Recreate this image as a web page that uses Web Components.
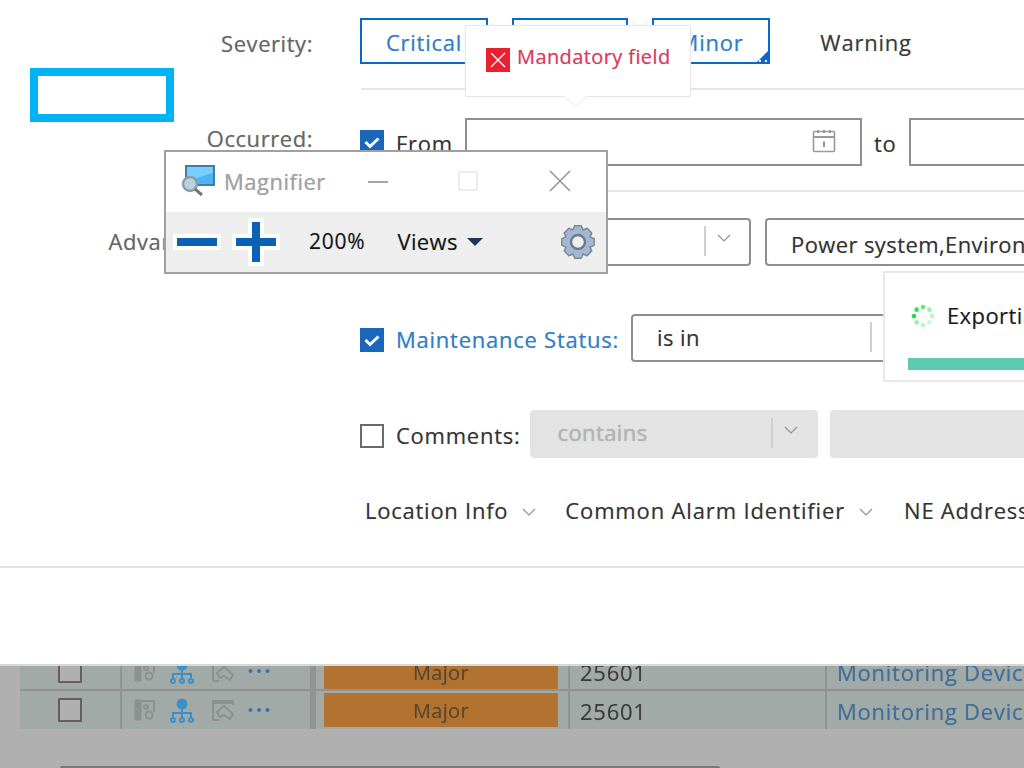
<!DOCTYPE html>
<html>
<head>
<meta charset="utf-8">
<title>Alarm filter</title>
<style>
  html, body { margin: 0; padding: 0; background: #fff; }
  body { font-family: "Open Sans", "Noto Sans", sans-serif; overflow: hidden; }
</style>
</head>
<body>
<alarm-screen></alarm-screen>

<script>
const chevron = `<svg width="14" height="8" viewBox="0 0 14 8"><path d="M1 1l6 6 6-6" fill="none" stroke="#929292" stroke-width="1.2"/></svg>`;

class SeverityChip extends HTMLElement {
  constructor() {
    super();
    this.attachShadow({ mode: 'open' });
    this.shadowRoot.innerHTML = `
      <style>
        :host { display: block; box-sizing: border-box; height: 46px; position: relative;
          border: 2px solid #0a67cc; color: #2a7fd0; font-size: 22px; letter-spacing: .75px; line-height: 46px; text-align: center; }
        :host([plain]) { border-color: transparent; color: #3a3a3a; }
        i { display: none; position: absolute; right: -2px; bottom: -2px; width: 0; height: 0;
          border-left: 15px solid transparent; border-bottom: 15px solid #0a67cc; }
        :host([mark]) i { display: block; }
        b { display: none; position: absolute; right: 1px; bottom: 0; width: 8px; height: 2px;
          background: linear-gradient(90deg, #fff 2px, transparent 2px, transparent 6px, #fff 6px); }
        :host([mark]) b { display: block; }
        span { position: relative; top: -1px; }
      </style>
      <span><slot></slot></span><i></i><b></b>`;
  }
}
customElements.define('severity-chip', SeverityChip);

class CheckBox extends HTMLElement {
  constructor() {
    super();
    this.attachShadow({ mode: 'open' });
    this.shadowRoot.innerHTML = `
      <style>
        :host { display: block; box-sizing: border-box; width: 24px; height: 24px; flex: none;
          border: 2px solid #6b6b6b; background: #fff; }
        :host([checked]) { border-color: #1a66bb; background: #1a66bb; }
        svg { display: none; }
        :host([checked]) svg { display: block; }
      </style>
      <svg width="20" height="20" viewBox="0 0 20 20"><path d="M3.5 10l4.5 4.5 8.5-8" fill="none" stroke="#fff" stroke-width="3"/></svg>`;
  }
}
customElements.define('check-box', CheckBox);

class SelectBox extends HTMLElement {
  constructor() {
    super();
    this.attachShadow({ mode: 'open' });
    this.shadowRoot.innerHTML = `
      <style>
        :host { display: flex; align-items: center; box-sizing: border-box; height: 48px; flex: none;
          border: 2px solid #8f8f8f; border-radius: 4px; background: #fff;
          font-size: 22px; letter-spacing: .4px; color: #333; padding-left: var(--pad, 24px); }
        :host([disabled]) { border-color: #e3e3e3; background: #e3e3e3; color: #b4b4b4; }
        .txt { flex: 1; white-space: nowrap; overflow: hidden; position: relative; top: var(--ty, -2px); }
        .sep { width: 2px; height: 30px; background: #cfcfcf; margin-right: 11px; position: relative; top: -1px; flex: none; }
        .arr { width: 32px; display: flex; position: relative; top: -4px; flex: none; }
        :host([noarrow]) .sep, :host([noarrow]) .arr { display: none; }
      </style>
      <span class="txt"><slot></slot></span>
      <span class="sep"></span>
      <span class="arr">${chevron}</span>`;
  }
}
customElements.define('select-box', SelectBox);

class DateInput extends HTMLElement {
  constructor() {
    super();
    this.attachShadow({ mode: 'open' });
    this.shadowRoot.innerHTML = `
      <style>
        :host { display: flex; align-items: center; justify-content: flex-end; box-sizing: border-box;
          height: 48px; flex: none; border: 2px solid #8f8f8f; background: #fff; padding-right: 24px; }
        svg { display: block; position: relative; top: -1px; }
      </style>
      <svg width="24" height="24" viewBox="0 0 24 24" fill="none" stroke="#9a9a9a" stroke-width="1.6">
        <rect x="1.5" y="2.5" width="21" height="20" rx="1"/>
        <path d="M1.5 8h21M6 1v3M12 1v3M18 1v3" stroke-width="2"/>
        <path d="M12 12.5v5.5" stroke="#777"/>
      </svg>`;
  }
}
customElements.define('date-input', DateInput);

class FormRow extends HTMLElement {
  constructor() {
    super();
    this.attachShadow({ mode: 'open' });
    this.shadowRoot.innerHTML = `
      <style>
        :host { display: flex; align-items: center; height: var(--h, 48px); white-space: nowrap; }
        .lab { width: 313px; flex: none; text-align: right; font-size: 22px; letter-spacing: .55px; color: #666; position: relative; top: var(--ly, -2px); }
        .body { flex: none; margin-left: 47px; display: flex; align-items: center; gap: var(--gap, 12px); }
      </style>
      <div class="lab"><slot name="label"></slot></div>
      <div class="body"><slot></slot></div>`;
  }
}
customElements.define('form-row', FormRow);

class MandatoryTip extends HTMLElement {
  constructor() {
    super();
    this.attachShadow({ mode: 'open' });
    this.shadowRoot.innerHTML = `
      <style>
        :host { position: absolute; left: 465px; top: 25px; width: 226px; height: 72px; box-sizing: border-box;
          background: #fff; border: 1px solid #e6e6e6; border-radius: 2px; box-shadow: 0 0 1px #ddd; z-index: 5;
          display: flex; align-items: flex-start; padding: 22px 0 0 20px; gap: 7px;
          color: #e8345a; font-size: 20px; letter-spacing: .4px; line-height: 24px; white-space: nowrap; }
        .x { width: 24px; height: 24px; background: #e8202f; flex: none; }
        .x svg { display: block; }
        .t { position: relative; top: -3px; }
        .tail { position: absolute; left: 97px; top: 70px; width: 24px; height: 14px; overflow: hidden; }
        .tail::before { content: ""; position: absolute; left: 4px; top: -9px; width: 16px; height: 16px;
          background: #fff; transform: rotate(45deg); border-right: 1px solid #eee; border-bottom: 1px solid #eee; }
      </style>
      <span class="x"><svg width="24" height="24" viewBox="0 0 24 24"><path d="M5 5l14 14M19 5L5 19" stroke="#fff" stroke-width="1.3" fill="none"/></svg></span>
      <span class="t"><slot></slot></span>
      <span class="tail"></span>`;
  }
}
customElements.define('mandatory-tip', MandatoryTip);

// 8 blunt teeth, same as the gear on the Windows magnifier
function gearPath(cx, cy, outer, inner) {
  let pts = [];
  for (let n = 0; n < 8; n++) {
    const a = n * Math.PI / 4 - Math.PI / 2;
    const w = 0.2;
    pts.push([cx + inner * Math.cos(a - 2 * w), cy + inner * Math.sin(a - 2 * w)]);
    pts.push([cx + outer * Math.cos(a - w), cy + outer * Math.sin(a - w)]);
    pts.push([cx + outer * Math.cos(a + w), cy + outer * Math.sin(a + w)]);
    pts.push([cx + inner * Math.cos(a + 2 * w), cy + inner * Math.sin(a + 2 * w)]);
  }
  return 'M' + pts.map(p => p[0].toFixed(1) + ' ' + p[1].toFixed(1)).join('L') + 'z';
}

class MagnifierWindow extends HTMLElement {
  constructor() {
    super();
    this.attachShadow({ mode: 'open' });
    this.shadowRoot.innerHTML = `
      <style>
        :host { position: absolute; left: 164px; top: 150px; width: 444px; height: 124px; box-sizing: border-box;
          border: 2px solid #a0a0a0; background: #fff; z-index: 6; display: flex; flex-direction: column; }
        .title { height: 60px; flex: none; display: flex; align-items: center; position: relative; }
        .logo { margin-left: 14px; display: block; position: relative; top: -1px; }
        .name { margin-left: 8px; font-size: 22px; letter-spacing: .5px; color: #a2a2a2; position: relative; top: -1px; }
        .btn { position: absolute; top: 0; }
        .tools { flex: 1; background: #eeeeee; display: flex; align-items: center; position: relative; color: #151515; font-size: 22px; }
        .tools svg { display: block; }
        .minus { margin-left: 7px; }
        .plus { margin-left: 11px; }
        .pct { margin-left: 29px; position: relative; top: -1px; font-size: 21px; }
        .views { margin-left: 32px; position: relative; top: -1px; letter-spacing: .4px; }
        .caret { margin-left: 9px; width: 0; height: 0; border-left: 8px solid transparent; border-right: 8px solid transparent; border-top: 8px solid #1f3558; }
        .gear { position: absolute; left: 394px; top: 12px; }
      </style>
      <div class="title">
        <svg class="logo" width="36" height="32" viewBox="0 0 36 32">
          <rect x="6" y="1" width="28" height="19" fill="#4db3f2" stroke="#3d7da6" stroke-width="2"/>
          <path d="M7 2h26v6L7 16z" fill="#79cdfa"/>
          <circle cx="10" cy="19" r="7" fill="#b6d3e0" stroke="#8d9ba4" stroke-width="2.4"/>
          <path d="M15 24l7 6" stroke="#6f7a82" stroke-width="3"/>
        </svg>
        <span class="name">Magnifier</span>
        <svg class="btn" style="left:201px" width="22" height="60" viewBox="0 0 22 60"><path d="M1 30h20" stroke="#8f8f8f" stroke-width="1.6"/></svg>
        <svg class="btn" style="left:292px" width="20" height="60" viewBox="0 0 20 60"><rect x="1" y="20" width="18" height="18" fill="none" stroke="#e8e8e8" stroke-width="1.6"/></svg>
        <svg class="btn" style="left:383px" width="22" height="60" viewBox="0 0 22 60"><path d="M1 19l20 20M21 19L1 39" stroke="#999" stroke-width="1.7" fill="none"/></svg>
      </div>
      <div class="tools">
        <svg class="minus" width="48" height="16" viewBox="0 0 48 16"><rect width="48" height="16" fill="#fff"/><rect x="4" y="4" width="40" height="8" fill="#0b62b4"/></svg>
        <svg class="plus" width="48" height="48" viewBox="0 0 48 48"><path d="M16 0h16v16h16v16H32v16H16V32H0V16h16z" fill="#fff"/><path d="M20 4h8v16h16v8H28v16h-8V28H4v-8h16z" fill="#0b62b4"/></svg>
        <span class="pct">200%</span>
        <span class="views">Views</span>
        <span class="caret"></span>
        <svg class="gear" width="36" height="36" viewBox="0 0 36 36">
          <path d="${gearPath(18, 18, 16.5, 13)}" fill="#a3b6d3" stroke="#7d8790" stroke-width="1.4" stroke-linejoin="round"/>
          <circle cx="18" cy="18" r="7" fill="#eee" stroke="#6f7a85" stroke-width="2.4"/>
        </svg>
      </div>`;
  }
}
customElements.define('magnifier-window', MagnifierWindow);

class ExportToast extends HTMLElement {
  constructor() {
    super();
    this.attachShadow({ mode: 'open' });
    let dots = '';
    const alpha = [1, .9, .7, .45, .3, .22, .3, .45];
    for (let n = 0; n < 8; n++) {
      const a = Math.PI - n * Math.PI / 4;
      dots += `<circle cx="${12 + 9 * Math.cos(a)}" cy="${12 + 9 * Math.sin(a)}" r="2.3" fill="#1fe03f" opacity="${alpha[(n * 7) % 8]}"/>`;
    }
    this.shadowRoot.innerHTML = `
      <style>
        :host { position: absolute; left: 883px; top: 271px; width: 200px; height: 111px; box-sizing: border-box;
          background: #fff; border: 2px solid #e8e8e8; z-index: 4; }
        .line { display: flex; align-items: center; gap: 12px; margin: 27px 0 0 26px; font-size: 22px; letter-spacing: .4px; color: #1a1a1a; white-space: nowrap; line-height: 30px; }
        .line svg { display: block; position: relative; top: 1px; }
        .bar { position: absolute; left: 23px; top: 85px; right: 0; height: 12px; background: #5ecab0; }
      </style>
      <div class="line"><svg width="24" height="24" viewBox="0 0 24 24">${dots}</svg><slot></slot></div>
      <div class="bar"></div>`;
  }
}
customElements.define('export-toast', ExportToast);

class GridRow extends HTMLElement {
  constructor() {
    super();
    this.attachShadow({ mode: 'open' });
    this.shadowRoot.innerHTML = `
      <style>
        :host { display: flex; height: 38px; flex: none; box-sizing: border-box; background: #a1aaa6; border-bottom: 2px solid #919191;
          font-size: 22px; letter-spacing: .75px; white-space: nowrap; overflow: hidden; }
        :host(:last-child) { border-bottom: 0; }
        .c { box-sizing: border-box; flex: none; display: flex; align-items: center; border-right: 2px solid #929292; height: 100%; }
        .chk { width: 102px; justify-content: center; }
        .chk i { display: block; box-sizing: border-box; width: 24px; height: 24px; background: #b0b0b0; border: 2px solid #606060; border-radius: 1px; }
        .ico { width: 188px; padding-left: 12px; border-right: 0; }
        .ico svg { display: block; flex: none; }
        .grip { width: 6px; background: #929292; flex: none; margin-right: 8px; }
        .sev { width: 234px; background: #b27330; color: #5a4630; justify-content: center; height: 34px; border: 0; border-radius: 1px; align-self: flex-start; margin: 2px 10px 0 0; font-size: 20px; letter-spacing: .3px; }
        .sev span { position: relative; top: 0; }
        .num { flex: none; width: 259px; padding-left: 10px; color: #3c3c3c; border-left: 2px solid #929292; }
        .lnk { flex: none; padding-left: 10px; color: #3d6f9f; }
        .num span, .lnk span { position: relative; top: 1px; }
      </style>
      <div class="c chk"><i></i></div>
      <div class="c ico">
        <svg width="22" height="22" viewBox="0 0 22 22" fill="none" stroke="#8c908e" stroke-width="2"><path d="M1 1h6v20H1z" fill="#8c908e" stroke-width="1"/><path d="M7 2h13v11"/><circle cx="12" cy="8" r="2"/><circle cx="15" cy="16" r="3.5"/></svg>
        <svg style="margin-left:14px" width="24" height="26" viewBox="0 0 24 26" fill="none" stroke="#3d8fc8" stroke-width="2"><circle cx="12" cy="7" r="5.5" fill="#3d8fc8" stroke="none"/><path d="M12 12v9M3 20v-4h18v4"/><circle cx="3" cy="23" r="2"/><circle cx="12" cy="23" r="2"/><circle cx="21" cy="23" r="2"/></svg>
        <svg style="margin-left:18px" width="22" height="22" viewBox="0 0 22 22" fill="none" stroke="#8c908e" stroke-width="2"><path d="M1 21V2h20v4M1 21h6M1 4h20"/><path d="M5 13l7-6 9 8-3 5-6-4-4 2z"/></svg>
        <svg style="margin-left:14px" width="22" height="6" viewBox="0 0 22 6" fill="#3d73ad"><circle cx="2.5" cy="3" r="2"/><circle cx="11" cy="3" r="2"/><circle cx="19.5" cy="3" r="2"/></svg>
      </div>
      <div class="grip"></div>
      <div class="c sev"><span>Major</span></div>
      <div class="c num"><span>25601</span></div>
      <div class="c lnk"><span>Monitoring Device</span></div>`;
  }
}
customElements.define('grid-row', GridRow);

class AlarmScreen extends HTMLElement {
  constructor() {
    super();
    this.attachShadow({ mode: 'open' });
    this.shadowRoot.innerHTML = `
      <style>
        :host { display: flex; flex-direction: column; position: relative; width: 1024px; height: 768px; overflow: hidden;
          background: #b0b0b0; color: #333; font-size: 22px; letter-spacing: .75px; text-shadow: 0 0 1px rgba(60,60,60,.35); }
        .dialog { height: 666px; flex: none; background: #fff; box-sizing: border-box; padding-top: 18px; border-bottom: 2px solid #d8d8d8; overflow: hidden; }
        .rule { height: 2px; background: #e6e6e6; margin: 24px 0 28px 361px; }
        .rule.two { margin-bottom: 26px; }
        .gap { height: 48px; }
        .chips { display: flex; }
        .chips severity-chip:nth-child(1) { width: 128px; }
        .chips severity-chip:nth-child(2) { width: 116px; margin-left: 24px; }
        .chips severity-chip:nth-child(3) { width: 118px; margin-left: 24px; }
        .chips severity-chip:nth-child(4) { width: 144px; margin-left: 24px; }
        .txt { position: relative; top: -1px; color: #333; }
        .low { margin-top: 4px; }
        .blue { color: #2a7fd0; }
        .links { display: flex; margin: 35px 0 0 365px; height: 40px; align-items: center; gap: 29px; white-space: nowrap; }
        .links span { display: flex; align-items: center; gap: 14px; position: relative; top: -3px; }
        .links span:nth-child(2) { letter-spacing: .85px; }
        .links span:nth-child(3) { margin-left: 2px; }
        .links svg { display: block; position: relative; top: 2px; }
        .foot-rule { height: 2px; background: #e3e3e3; margin-top: 33px; }
        .grid { height: 63px; flex: none; margin-left: 20px; overflow: hidden; display: flex; flex-direction: column; justify-content: flex-end; filter: blur(.5px); }
        .track { flex: none; margin: 37px 0 0 60px; width: 660px; height: 2px; background: #787878; border-radius: 2px 2px 0 0; }
        .focus { position: absolute; left: 30px; top: 68px; width: 144px; height: 54px; box-sizing: border-box; border: 8px solid #00b3f4; z-index: 3; }
      </style>
      <div class="dialog">
        <form-row style="--h:46px;--gap:0;--ly:2px">
          <span slot="label">Severity:</span>
          <div class="chips">
            <severity-chip>Critical</severity-chip>
            <severity-chip></severity-chip>
            <severity-chip mark>Minor</severity-chip>
            <severity-chip plain>Warning</severity-chip>
          </div>
        </form-row>
        <div class="rule"></div>
        <form-row style="--ly:-4px">
          <span slot="label">Occurred:</span>
          <check-box checked></check-box>
          <span class="txt" style="top:1px">From</span>
          <date-input style="width:397px"></date-input>
          <span class="txt" style="top:1px">to</span>
          <date-input style="width:300px"></date-input>
        </form-row>
        <div class="rule two"></div>
        <form-row style="--ly:-1px">
          <span slot="label" style="margin-right:14px">Advanced Search:</span>
          <select-box style="width:391px"></select-box>
          <select-box noarrow style="width:400px;margin-left:2px;--ty:2px">Power system,Environment</select-box>
        </form-row>
        <div class="gap"></div>
        <form-row>
          <span slot="label"></span>
          <check-box checked class="low"></check-box>
          <span class="txt blue low">Maintenance Status:</span>
          <select-box style="width:286px;--ty:-1px">is in</select-box>
        </form-row>
        <div class="gap"></div>
        <form-row>
          <span slot="label"></span>
          <check-box class="low"></check-box>
          <span class="txt low">Comments:</span>
          <select-box disabled style="width:288px;margin-left:-3px;--pad:26px">contains</select-box>
          <select-box disabled noarrow style="width:300px"></select-box>
        </form-row>
        <div class="links">
          <span>Location Info ${chevron}</span>
          <span>Common Alarm Identifier ${chevron}</span>
          <span>NE Address ${chevron}</span>
        </div>
        <div class="foot-rule"></div>
      </div>
      <div class="grid">
        <grid-row></grid-row>
        <grid-row></grid-row>
      </div>
      <div class="track"></div>
      <div class="focus"></div>
      <mandatory-tip>Mandatory field</mandatory-tip>
      <magnifier-window></magnifier-window>
      <export-toast>Exporting</export-toast>`;
  }
}
customElements.define('alarm-screen', AlarmScreen);
</script>
</body>
</html>
